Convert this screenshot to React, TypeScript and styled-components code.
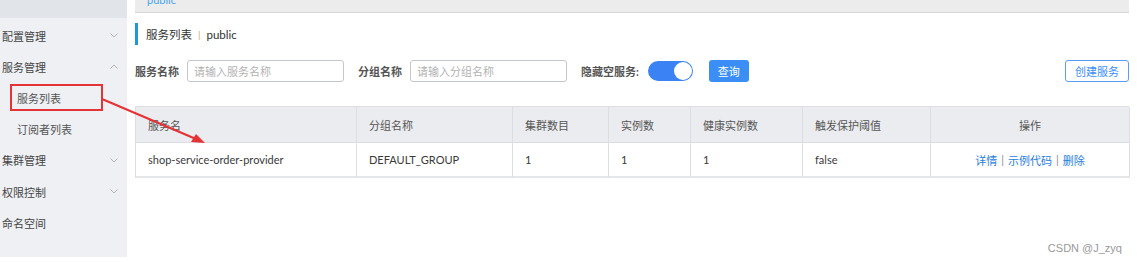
import styled, { createGlobalStyle } from "styled-components";

const Global = createGlobalStyle`
  html, body {
    margin: 0;
    padding: 0;
    background: #fff;
  }
  body {
    font-family: Lato, "Noto Sans CJK SC", sans-serif;
    font-size: 11px;
    color: #333;
  }
`;

const Page = styled.div`
  position: relative;
  width: 1137px;
  height: 262px;
  display: flex;
  gap: 8px;
  overflow: hidden;
`;

const Sidebar = styled.aside`
  width: 127px;
  height: 257px;
  background: #eef0f4;
  display: flex;
  flex-direction: column;
`;

const SideTop = styled.div`
  height: 18px;
  background: #e1e4e9;
  margin-bottom: 2px;
`;

const NavItem = styled.div<{ $sub?: boolean }>`
  height: 31.2px;
  display: flex;
  align-items: center;
  justify-content: space-between;
  padding-left: ${(p) => (p.$sub ? "17px" : "2px")};
  padding-right: 9px;
  font-size: 11px;
  color: ${(p) => (p.$sub ? "#555" : "#444")};
`;

const Chevron = styled.svg`
  width: 8px;
  height: 5px;
  fill: none;
  stroke: #b0b5bd;
  stroke-width: 1;
`;

const Main = styled.main`
  width: 994px;
  display: flex;
  flex-direction: column;
`;

const TopStrip = styled.div`
  height: 12px;
  background: #ececec;
  border-bottom: 1px solid #d6d6d6;
  overflow: hidden;
  padding-left: 12px;
  color: #46a6ee;
  font-size: 11px;
  line-height: 0;
`;

const Title = styled.div`
  margin-top: 10px;
  height: 22px;
  border-left: 3px solid #1a9bd7;
  padding-left: 8px;
  display: flex;
  align-items: center;
  gap: 6px;
  font-size: 11.5px;
  color: #333;
`;

const Sep = styled.span`
  color: #c9a96a;
  font-size: 10px;
`;

const Filters = styled.div`
  margin-top: 15px;
  height: 22px;
  display: flex;
  align-items: center;
`;

const Label = styled.span<{ $gap?: number }>`
  font-weight: 700;
  font-size: 11px;
  color: #555;
  margin-right: ${(p) => p.$gap ?? 8}px;
`;

const Input = styled.div`
  width: 149px;
  height: 20px;
  border: 1px solid #c4c6cf;
  border-radius: 3px;
  display: flex;
  align-items: center;
  padding-left: 6px;
  color: #b3b3b3;
  font-size: 11px;
  margin-right: 14px;
`;

const Toggle = styled.div`
  width: 45px;
  height: 20px;
  border-radius: 10px;
  background: #3b83f5;
  position: relative;
  margin-right: 16px;
  &::after {
    content: "";
    position: absolute;
    right: 1px;
    top: 1px;
    width: 18px;
    height: 18px;
    border-radius: 50%;
    background: #fff;
  }
`;

const Button = styled.div<{ $ghost?: boolean }>`
  height: ${(p) => (p.$ghost ? "20px" : "22px")};
  padding: 0 9px;
  display: flex;
  align-items: center;
  border-radius: 3px;
  font-size: 11px;
  background: ${(p) => (p.$ghost ? "#fff" : "#3a8ef6")};
  color: ${(p) => (p.$ghost ? "#3a8ef6" : "#fff")};
  border: ${(p) => (p.$ghost ? "1px solid #5b9cf6" : "none")};
  margin-left: ${(p) => (p.$ghost ? "auto" : "0")};
`;

const Table = styled.div`
  margin-top: 24px;
  display: grid;
  grid-template-columns: 221px 156px 96px 82px 112px 128px 199px;
  border: 1px solid #dcdee3;
  border-right: none;
  border-bottom: none;
`;

const Cell = styled.div<{ $head?: boolean; $center?: boolean }>`
  height: ${(p) => (p.$head ? "35px" : "33px")};
  display: flex;
  align-items: center;
  justify-content: ${(p) => (p.$center ? "center" : "flex-start")};
  padding-left: ${(p) => (p.$center ? "0" : "12px")};
  background: ${(p) => (p.$head ? "#ebecf0" : "#fff")};
  border-right: 1px solid #dcdee3;
  border-bottom: ${(p) => (p.$head ? "1px solid #dcdee3" : "2px solid #e4e6ea")};
  color: ${(p) => (p.$head ? "#555" : "#3a3a3a")};
  font-size: 11px;
`;

const Link = styled.span`
  color: #2a80dd;
`;

const Bar = styled.span`
  color: #888;
  margin: 0 4px;
`;

const Highlight = styled.div`
  position: absolute;
  left: 10px;
  top: 84px;
  width: 89px;
  height: 23px;
  border: 2px solid #e53235;
  pointer-events: none;
`;

const Arrow = styled.svg`
  position: absolute;
  left: 0;
  top: 0;
  pointer-events: none;
`;

const Watermark = styled.div`
  position: absolute;
  right: 15px;
  bottom: 8px;
  font-family: "Liberation Sans", Arial, sans-serif;
  font-size: 11px;
  color: #999;
`;

const nav = [
  { label: "配置管理", chevron: "down" },
  { label: "服务管理", chevron: "up" },
  { label: "服务列表", sub: true },
  { label: "订阅者列表", sub: true },
  { label: "集群管理", chevron: "down" },
  { label: "权限控制", chevron: "down" },
  { label: "命名空间" },
];

const heads = ["服务名", "分组名称", "集群数目", "实例数", "健康实例数", "触发保护阈值", "操作"];
const row = ["shop-service-order-provider", "DEFAULT_GROUP", "1", "1", "1", "false"];

export default function App() {
  return (
    <>
      <Global />
      <Page>
        <Sidebar>
          <SideTop />
          {nav.map((n) => (
            <NavItem key={n.label} $sub={n.sub}>
              {n.label}
              {n.chevron && (
                <Chevron viewBox="0 0 8 5">
                  <polyline points={n.chevron === "down" ? "0.5,0.5 4,4 7.5,0.5" : "0.5,4.5 4,1 7.5,4.5"} />
                </Chevron>
              )}
            </NavItem>
          ))}
        </Sidebar>
        <Main>
          <TopStrip>public</TopStrip>
          <Title>
            服务列表 <Sep>|</Sep> public
          </Title>
          <Filters>
            <Label>服务名称</Label>
            <Input>请输入服务名称</Input>
            <Label>分组名称</Label>
            <Input>请输入分组名称</Input>
            <Label $gap={9}>隐藏空服务:</Label>
            <Toggle />
            <Button>查询</Button>
            <Button $ghost>创建服务</Button>
          </Filters>
          <Table>
            {heads.map((h, i) => (
              <Cell key={h} $head $center={i === 6}>
                {h}
              </Cell>
            ))}
            {row.map((v, i) => (
              <Cell key={i}>{v}</Cell>
            ))}
            <Cell $center>
              <Link>详情</Link>
              <Bar>|</Bar>
              <Link>示例代码</Link>
              <Bar>|</Bar>
              <Link>删除</Link>
            </Cell>
          </Table>
        </Main>
        <Highlight />
        <Arrow width="1137" height="262">
          <line x1="102" y1="99" x2="196" y2="139" stroke="#e53235" strokeWidth="2" />
          <polygon points="205,143 191,142 196,134" fill="#e53235" />
        </Arrow>
        <Watermark>CSDN @J_zyq</Watermark>
      </Page>
    </>
  );
}
